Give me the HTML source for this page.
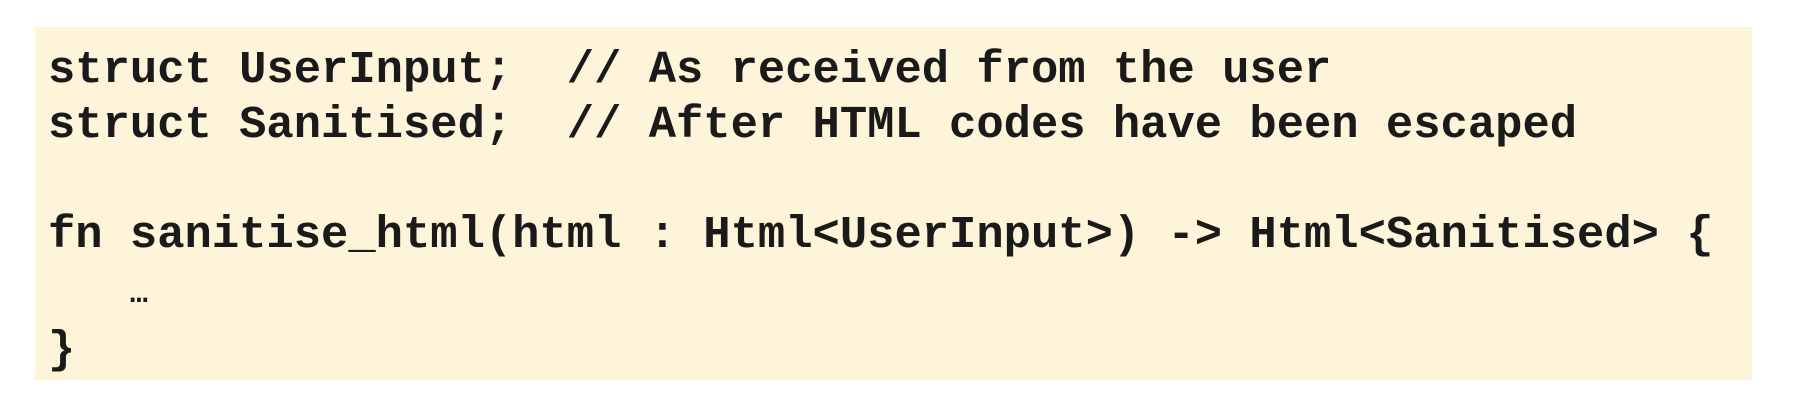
<!DOCTYPE html>
<html><head><meta charset="utf-8"><style>
html,body{margin:0;padding:0;background:#fff;width:1793px;height:407px;overflow:hidden}
.box{position:absolute;left:35px;top:27px;width:1717px;height:353px;background:#fdf4d9}
pre{position:absolute;left:48px;top:43px;margin:0;font-family:"Liberation Mono",monospace;font-weight:bold;font-size:45.5px;line-height:55px;color:#1a1a1a}
</style></head><body>
<div class="box"></div>
<pre>struct UserInput;  // As received from the user
struct Sanitised;  // After HTML codes have been escaped

fn sanitise_html(html : Html&lt;UserInput&gt;) -&gt; Html&lt;Sanitised&gt; {
   <span style="font-size:30px">…</span>
}</pre>
</body></html>
